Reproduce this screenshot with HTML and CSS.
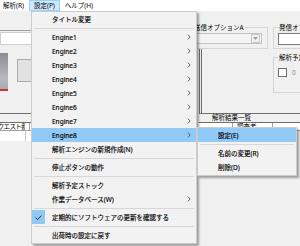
FILE: index.html
```html
<!DOCTYPE html>
<html lang="ja">
<head>
<meta charset="utf-8">
<title>設定メニュー</title>
<link rel="stylesheet" href="styles.css">
</head>
<body>
<div class="app">
  <nav class="menubar">
    <span class="menubar-item">解析(R)</span>
    <span class="menubar-item is-open">設定(P)</span>
    <span class="menubar-item">ヘルプ(H)</span>
  </nav>

  <main class="workspace">
    <section class="left-pane">
      <div class="toolbar-space"></div>
      <div class="path-field"></div>
      <div class="media-row">
        <div class="thumb"></div>
        <div class="push-button"></div>
      </div>
      <div class="list-panel">
        <div class="list-title"></div>
        <div class="list-header">
          <span class="col col-req">リクエスト番号</span>
          <span class="col col-next"></span>
        </div>
        <div class="list-body"><span class="cell cell-req"></span></div>
      </div>
    </section>

    <section class="right-pane">
      <div class="option-row">
        <div class="group group-a">
          <div class="group-title">送信オプションA</div>
          <div class="combo"><span class="combo-btn"><svg viewBox="0 0 5 3" width="5" height="3"><path d="M0 0H5L2.5 3Z" fill="#a0a0a0"/></svg></span></div>
        </div>
        <div class="group group-b">
          <div class="group-title">発信オプションB</div>
          <div class="textbox"></div>
        </div>
      </div>
      <div class="split-panel">
        <div class="group group-c">
          <div class="group-title">解析予定</div>
          <div class="check-row"><span class="checkbox"></span><span class="check-label">0</span></div>
        </div>
      </div>
      <div class="results">
        <div class="results-title">解析結果一覧</div>
        <div class="list-header">
          <span class="col col-no"></span>
          <span class="col col-user">調査者</span>
        </div>
      </div>
    </section>
  </main>

  <div class="menu main-menu">
    <div class="mi">タイトル変更</div>
    <div class="sep"></div>
    <div class="mi has-sub">Engine1<svg class="arrow" viewBox="0 0 4 6" width="4" height="6"><path d="M0.8 0.6L3.2 3L0.8 5.4" fill="none" stroke="#505050" stroke-width="0.9"/></svg></div>
    <div class="mi has-sub">Engine2<svg class="arrow" viewBox="0 0 4 6" width="4" height="6"><path d="M0.8 0.6L3.2 3L0.8 5.4" fill="none" stroke="#505050" stroke-width="0.9"/></svg></div>
    <div class="mi has-sub">Engine3<svg class="arrow" viewBox="0 0 4 6" width="4" height="6"><path d="M0.8 0.6L3.2 3L0.8 5.4" fill="none" stroke="#505050" stroke-width="0.9"/></svg></div>
    <div class="mi has-sub">Engine4<svg class="arrow" viewBox="0 0 4 6" width="4" height="6"><path d="M0.8 0.6L3.2 3L0.8 5.4" fill="none" stroke="#505050" stroke-width="0.9"/></svg></div>
    <div class="mi has-sub">Engine5<svg class="arrow" viewBox="0 0 4 6" width="4" height="6"><path d="M0.8 0.6L3.2 3L0.8 5.4" fill="none" stroke="#505050" stroke-width="0.9"/></svg></div>
    <div class="mi has-sub">Engine6<svg class="arrow" viewBox="0 0 4 6" width="4" height="6"><path d="M0.8 0.6L3.2 3L0.8 5.4" fill="none" stroke="#505050" stroke-width="0.9"/></svg></div>
    <div class="mi has-sub">Engine7<svg class="arrow" viewBox="0 0 4 6" width="4" height="6"><path d="M0.8 0.6L3.2 3L0.8 5.4" fill="none" stroke="#505050" stroke-width="0.9"/></svg></div>
    <div class="mi has-sub is-hot">Engine8<svg class="arrow" viewBox="0 0 4 6" width="4" height="6"><path d="M0.8 0.6L3.2 3L0.8 5.4" fill="none" stroke="#505050" stroke-width="0.9"/></svg></div>
    <div class="mi">解析エンジンの新規作成(N)</div>
    <div class="sep"></div>
    <div class="mi">停止ボタンの動作</div>
    <div class="sep"></div>
    <div class="mi">解析予定ストック</div>
    <div class="mi has-sub">作業データベース(W)<svg class="arrow" viewBox="0 0 4 6" width="4" height="6"><path d="M0.8 0.6L3.2 3L0.8 5.4" fill="none" stroke="#505050" stroke-width="0.9"/></svg></div>
    <div class="sep"></div>
    <div class="mi is-checked"><span class="check"><svg viewBox="0 0 13 13" width="13" height="13"><path d="M3.6 6.6L5.6 8.6L9.4 4.6" fill="none" stroke="#333" stroke-width="1"/></svg></span>定期的にソフトウェアの更新を確認する</div>
    <div class="sep"></div>
    <div class="mi">出荷時の設定に戻す</div>
  </div>

  <div class="menu sub-menu">
    <div class="mi is-hot">設定(E)</div>
    <div class="sep"></div>
    <div class="mi">名前の変更(R)</div>
    <div class="mi">削除(D)</div>
  </div>
</div>
</body>
</html>
```

FILE: styles.css
```css
* {
  box-sizing: border-box;
  margin: 0;
  padding: 0;
}

html, body {
  width: 300px;
  height: 246px;
  overflow: hidden;
}

body {
  background: #f0f0f0;
  font-family: "Noto Sans", "Noto Sans CJK JP", sans-serif;
  font-size: 6.5px;
  color: #000;
}

.app {
  position: relative;
  width: 300px;
  height: 246px;
  overflow: hidden;
}

/* ---------- menu bar ---------- */
.menubar {
  display: flex;
  height: 11px;
  background: #fff;
}

.menubar-item {
  padding: 0 4px;
  border: 1px solid transparent;
  line-height: 9px;
  white-space: nowrap;
}

.menubar-item:first-child {
  margin-left: -2px;
}

.menubar-item.is-open {
  background: #cce8ff;
  border-color: #99d1ff;
}

/* ---------- background window ---------- */
.workspace {
  display: grid;
  grid-template-columns: 186px 1fr;
}

.left-pane {
  display: flex;
  flex-direction: column;
}

.toolbar-space {
  height: 20px;
  border-bottom: 1px solid #a0a0a0;
}

.path-field {
  margin-top: 1px;
  width: 180px;
  height: 13px;
  background: #fff;
  border: 1px solid #cfcfcf;
}

.media-row {
  display: flex;
  margin-top: 8px;
}

.thumb {
  width: 8px;
  height: 38px;
  background: linear-gradient(#8c8c94, #b8b8c0 70%, #a9a9b2);
  border-bottom: 2px solid #c83a3a;
}

.push-button {
  margin: 6px 0 0 9px;
  width: 40px;
  height: 23px;
  background: #e1e1e1;
  border: 1px solid #adadad;
}

.list-panel {
  margin-top: 22px;
  border-top: 1px solid #6e6e6e;
}

.list-title {
  height: 8px;
}

.list-header {
  display: flex;
  height: 9px;
  border-top: 1px solid #6e6e6e;
  border-bottom: 1px solid #a0a0a0;
  background: #fff;
  overflow: hidden;
}

.list-header .col {
  white-space: nowrap;
  overflow: hidden;
  line-height: 8px;
  border-right: 1px solid #a0a0a0;
}

.col-req {
  width: 25px;
  text-indent: -8px;
  letter-spacing: -0.7px;
}

.col-next {
  width: 5px;
}

.list-body {
  display: flex;
  height: 10px;
  background: #fff;
}

.cell-req {
  width: 26px;
  border-right: 1px solid #c8c8c8;
}

.right-pane {
  display: flex;
  flex-direction: column;
}

.option-row {
  display: flex;
  gap: 5px;
  padding-top: 16px;
  height: 38px;
}

.group {
  border: 1px solid #d5d5d5;
}

.group-title {
  width: max-content;
  margin: -4px 0 0 6px;
  padding: 0 1px;
  line-height: 8px;
  background: #f0f0f0;
  white-space: nowrap;
}

.group-a {
  width: 82px;
  height: 22px;
}

.combo {
  display: flex;
  justify-content: flex-end;
  align-items: center;
  margin: 1px 5px 0 6px;
  height: 11px;
  background: #f4f4f4;
  border: 1px solid #c2c2c2;
}

.combo-btn {
  display: flex;
  align-items: center;
  justify-content: center;
  width: 9px;
  height: 9px;
  margin-right: 1px;
  border: 1px solid #c8c8c8;
  background: #f0f0f0;
}

.group-b {
  flex: 1;
  height: 22px;
  margin-right: -30px;
}

.group-b .group-title {
  margin-left: 4px;
}

.textbox {
  margin: 1px 0 0 4px;
  height: 12px;
  background: #fff;
  border: 1px solid #7a7a7a;
}

.split-panel {
  height: 65px;
  margin-left: 13px;
  padding: 8px 0 0 71px;
  border-left: 3px double #6e6e6e;
  border-bottom: 1px solid #6e6e6e;
}

.group-c {
  height: 36px;
  margin-right: -20px;
}

.group-c .group-title {
  margin-left: 4px;
}

.check-row {
  display: flex;
  align-items: center;
  gap: 5px;
  margin: 6px 0 0 4px;
}

.checkbox {
  width: 9px;
  height: 9px;
  background: #fff;
  border: 1px solid #6e6e6e;
}

.check-label {
  color: #8a8a8a;
}

.results {
  margin-left: 13px;
}

.results-title {
  height: 8px;
  line-height: 8px;
  padding-left: 13px;
}

.col-no {
  width: 34px;
}

.col-user {
  width: 40px;
  padding-left: 4px;
}

/* ---------- popup menus ---------- */
.menu {
  position: absolute;
  background: #f2f2f2;
  border: 1px solid #cccccc;
  padding-bottom: 1px;
  box-shadow: 2px 2px 2px rgba(0, 0, 0, 0.35);
}

.main-menu {
  left: 31px;
  top: 11px;
  width: 166px;
}

.sub-menu {
  left: 197px;
  top: 127px;
  width: 100px;
}

.mi {
  position: relative;
  display: flex;
  align-items: center;
  height: 14px;
  padding-left: 20px;
  white-space: nowrap;
  -webkit-text-stroke: 0.15px #000;
}

.mi.is-hot {
  background: #91c9f7;
}

.arrow {
  position: absolute;
  right: 5px;
  top: 4px;
}

.check {
  position: absolute;
  left: 0;
  top: 0;
  width: 13px;
  height: 14px;
  display: flex;
  align-items: center;
  background: #90c8f6;
}

.sep {
  display: flex;
  align-items: center;
  height: 4px;
  padding: 0 2px;
}

.sep::after {
  content: "";
  flex: 1;
  height: 1px;
  background: #d7d7d7;
}
```
